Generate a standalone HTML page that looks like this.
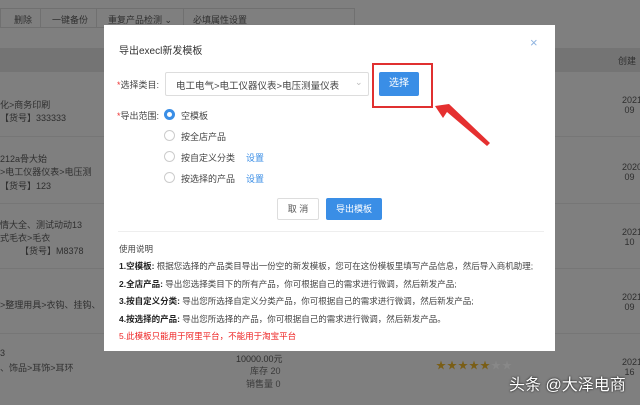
<!DOCTYPE html>
<html><head><meta charset="utf-8"><style>
*{margin:0;padding:0;box-sizing:border-box}
body{width:640px;height:405px;overflow:hidden;background:#7f7f7f;font-family:"Liberation Sans","Noto Sans CJK SC",sans-serif;position:relative;color:#2a2a2a}
.a{position:absolute;white-space:nowrap}
.bg{font-size:9px;color:#2f2f2f}
.m{position:absolute;left:104px;top:25px;width:451px;height:326px;background:#fff}
.t{font-size:10px;color:#333}
.lbl{font-size:9px;color:#444}
.r{position:absolute;width:11px;height:11px;border:1px solid #ccc;border-radius:50%}
.note{font-size:8.5px;color:#444}
.note b{color:#222}
</style></head><body>
<div class="a" style="left:0;top:8px;width:355px;height:20px;border:1px solid #707070;"></div>
<div class="a bg" style="left:14px;top:13px">删除</div>
<div class="a" style="left:40px;top:8px;width:1px;height:20px;background:#707070"></div>
<div class="a bg" style="left:52px;top:13px">一键备份</div>
<div class="a" style="left:96px;top:8px;width:1px;height:20px;background:#707070"></div>
<div class="a bg" style="left:108px;top:13px">重复产品检测 ⌄</div>
<div class="a" style="left:183px;top:8px;width:1px;height:20px;background:#707070"></div>
<div class="a bg" style="left:193px;top:13px">必填属性设置</div>
<div class="a" style="left:0;top:48px;width:640px;height:24px;background:#747474"></div>
<div class="a bg" style="left:618px;top:54px">创建</div>
<div class="a" style="left:0;top:136px;width:640px;height:1px;background:#767676"></div>
<div class="a" style="left:0;top:203px;width:640px;height:1px;background:#767676"></div>
<div class="a" style="left:0;top:268px;width:640px;height:1px;background:#767676"></div>
<div class="a" style="left:0;top:333px;width:640px;height:1px;background:#767676"></div>
<div class="a bg" style="left:0;top:98px">化>商务印刷</div>
<div class="a bg" style="left:0;top:111px">【货号】333333</div>
<div class="a bg" style="left:0;top:152px">212a骨大始</div>
<div class="a bg" style="left:0;top:165px">>电工仪器仪表>电压测</div>
<div class="a bg" style="left:0;top:179px">【货号】123</div>
<div class="a bg" style="left:0;top:218px">情大全、测试动动13</div>
<div class="a bg" style="left:0;top:231px">式毛衣>毛衣</div>
<div class="a bg" style="left:20px;top:244px">【货号】M8378</div>
<div class="a bg" style="left:0;top:298px">>整理用具>衣钩、挂钩、</div>
<div class="a bg" style="left:0;top:348px">3</div>
<div class="a bg" style="left:0;top:361px">、饰品>耳饰>耳环</div>
<div class="a bg" style="left:236px;top:352px">10000.00元</div>
<div class="a bg" style="left:250px;top:364px;color:#3a3a3a">库存 20</div>
<div class="a bg" style="left:246px;top:377px;color:#3a3a3a">销售量 0</div>
<div class="a" style="left:436px;top:357px;font-size:10px;color:#7a5e16;letter-spacing:1px">★★★★★<span style="color:#888">★★</span></div>
<div class="a bg" style="left:622px;top:95px">2021<br>&nbsp;09</div>
<div class="a bg" style="left:622px;top:162px">2020<br>&nbsp;09</div>
<div class="a bg" style="left:622px;top:227px">2021<br>&nbsp;10</div>
<div class="a bg" style="left:622px;top:292px">2021<br>&nbsp;09</div>
<div class="a bg" style="left:622px;top:357px">2021<br>&nbsp;16</div>
<div class="a" style="left:509px;top:371px;font-size:16px;color:#fff;text-shadow:0 0 2px #000">头条 @大泽电商</div>

<div class="m">
<div class="a t" style="left:15px;top:17px">导出execl新发模板</div>
<div class="a" style="left:426px;top:10px;font-size:13px;color:#8fb4e0">×</div>
<div class="a lbl" style="left:13px;top:53px"><span style="color:#e33">*</span>选择类目:</div>
<div class="a" style="left:61px;top:47px;width:204px;height:24px;border:1px solid #ddd;border-radius:2px"></div>
<div class="a" style="left:72px;top:53px;font-size:9.5px;color:#444">电工电气>电工仪器仪表>电压测量仪表</div>
<div class="a" style="left:251px;top:52px;font-size:9px;color:#bbb">⌄</div>
<div class="a" style="left:275px;top:47px;width:40px;height:24px;background:#3a8ee6;color:#fff;font-size:10px;text-align:center;line-height:24px;border-radius:2px">选择</div>
<div class="a" style="left:268px;top:38px;width:61px;height:45px;border:2px solid #e03030"></div>
<div class="a lbl" style="left:13px;top:84px"><span style="color:#e33">*</span>导出范围:</div>
<div class="r" style="left:60px;top:84px;border:3px solid #3a8ee6"></div>
<div class="a lbl" style="left:77px;top:84px">空模板</div>
<div class="r" style="left:60px;top:105px"></div>
<div class="a lbl" style="left:77px;top:105px">按全店产品</div>
<div class="r" style="left:60px;top:126px"></div>
<div class="a lbl" style="left:77px;top:126px">按自定义分类</div>
<div class="a lbl" style="left:142px;top:126px;color:#3a8ee6">设置</div>
<div class="r" style="left:60px;top:147px"></div>
<div class="a lbl" style="left:77px;top:147px">按选择的产品</div>
<div class="a lbl" style="left:142px;top:147px;color:#3a8ee6">设置</div>
<div class="a" style="left:173px;top:173px;width:42px;height:22px;border:1px solid #ddd;font-size:9px;color:#555;text-align:center;line-height:20px;border-radius:2px">取 消</div>
<div class="a" style="left:222px;top:173px;width:56px;height:22px;background:#3a8ee6;color:#fff;font-size:9px;text-align:center;line-height:22px;border-radius:2px">导出模板</div>
<div class="a" style="left:14px;top:206px;width:426px;height:1px;background:#eee"></div>
<div class="a note" style="left:15px;top:218px">使用说明</div>
<div class="a note" style="left:15px;top:235px"><b>1.空模板:</b> 根据您选择的产品类目导出一份空的新发模板，您可在这份模板里填写产品信息，然后导入商机助理;</div>
<div class="a note" style="left:15px;top:253px"><b>2.全店产品:</b> 导出您选择类目下的所有产品，你可根据自己的需求进行微调，然后新发产品;</div>
<div class="a note" style="left:15px;top:270px"><b>3.按自定义分类:</b> 导出您所选择自定义分类产品，你可根据自己的需求进行微调，然后新发产品;</div>
<div class="a note" style="left:15px;top:288px"><b>4.按选择的产品:</b> 导出您所选择的产品，你可根据自己的需求进行微调，然后新发产品。</div>
<div class="a note" style="left:15px;top:305px;color:#e22">5.此模板只能用于阿里平台，不能用于淘宝平台</div>
</div>
<svg class="a" style="left:0;top:0" width="640" height="405"><polygon points="435,106 449,104 490,143 487,146 447,112 443,118" fill="#e53030"/></svg>
</body></html>
